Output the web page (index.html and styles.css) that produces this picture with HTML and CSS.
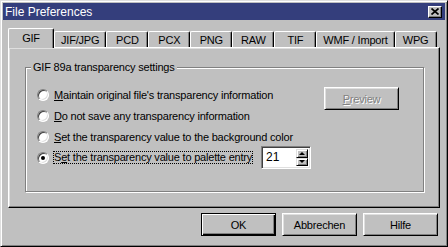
FILE: index.html
```html
<!DOCTYPE html>
<html lang="en">
<head>
    <meta charset="UTF-8">
    <title>File Preferences</title>
    <link rel="stylesheet" href="styles.css">
</head>
<body>
    <div class="window">
        <div class="titlebar">
            <span class="title">File Preferences</span>
            <button class="close-btn" aria-label="Close">
                <svg width="8" height="7" viewBox="0 0 8 7">
                    <path d="M0.5 0.5 L7.5 6.5 M7.5 0.5 L0.5 6.5" stroke="#000" stroke-width="1.7" fill="none"/>
                </svg>
            </button>
        </div>

        <div class="dialog">
            <div class="tabs">
                <div class="tab active">GIF</div>
                <div class="tab">JIF/JPG</div>
                <div class="tab">PCD</div>
                <div class="tab">PCX</div>
                <div class="tab">PNG</div>
                <div class="tab">RAW</div>
                <div class="tab">TIF</div>
                <div class="tab">WMF / Import</div>
                <div class="tab">WPG</div>
            </div>

            <div class="panel">
                <fieldset class="group">
                    <legend>GIF 89a transparency settings</legend>
                    <div class="group-body">
                        <div class="options">
                            <label class="option">
                                <span class="radio"></span>
                                <span><u>M</u>aintain original file's transparency information</span>
                            </label>
                            <label class="option">
                                <span class="radio"></span>
                                <span><u>D</u>o not save any transparency information</span>
                            </label>
                            <label class="option">
                                <span class="radio"></span>
                                <span><u>S</u>et the transparency value to the background color</span>
                            </label>
                            <div class="option">
                                <span class="radio checked"></span>
                                <span class="focus">S<u>e</u>t the transparency value to palette entry</span>
                                <div class="spin">
                                    <span class="spin-value">21</span>
                                    <div class="spin-btns">
                                        <span class="spin-btn"><i class="arrow up"></i></span>
                                        <span class="spin-btn"><i class="arrow down"></i></span>
                                    </div>
                                </div>
                            </div>
                        </div>
                        <button class="btn preview" disabled><u>P</u>review</button>
                    </div>
                </fieldset>
            </div>

            <div class="actions">
                <button class="btn default">OK</button>
                <button class="btn">Abbrechen</button>
                <button class="btn">Hilfe</button>
            </div>
        </div>
    </div>
</body>
</html>
```

FILE: styles.css
```css
:root {
    --face: #c0c0c0;
    --light: #dfdfdf;
    --shadow: #808080;
    --dark: #000000;
    --title: #343e7c;
}

* {
    margin: 0;
    padding: 0;
    box-sizing: border-box;
}

body {
    font-family: "Liberation Sans", Arial, sans-serif;
    font-size: 11px;
    letter-spacing: -0.2px;
    color: #000;
    background: var(--face);
}

.window {
    width: 448px;
    height: 247px;
    background: var(--face);
    border: 1px solid;
    border-color: var(--light) var(--dark) var(--dark) var(--light);
    box-shadow: inset 1px 1px #fff, inset -1px -1px var(--shadow);
    padding: 2px;
    display: flex;
    flex-direction: column;
}

/* title bar */
.titlebar {
    height: 17px;
    background: var(--title);
    color: #fff;
    display: flex;
    align-items: center;
    justify-content: space-between;
    padding: 0 3px 0 2px;
}

.title {
    font-size: 12px;
    letter-spacing: 0;
}

.close-btn {
    width: 14px;
    height: 12px;
    background: var(--face);
    border: 1px solid;
    border-color: #fff var(--dark) var(--dark) #fff;
    box-shadow: inset -1px -1px var(--shadow);
    display: flex;
    align-items: center;
    justify-content: center;
}

.close-btn svg {
    display: block;
}

.dialog {
    flex: 1;
    padding: 8px 5px 0 5px;
    display: flex;
    flex-direction: column;
}

/* tabs */
.tabs {
    display: flex;
    align-items: flex-end;
    height: 20px;
    margin-bottom: -1px;
    position: relative;
    z-index: 1;
}

.tab {
    height: 16px;
    margin-bottom: 1px;
    min-width: 42px;
    padding: 0 6px;
    display: flex;
    align-items: center;
    justify-content: center;
    background: var(--face);
    border-top: 1px solid #fff;
    border-left: 1px solid #fff;
    border-right: 1px solid var(--dark);
    box-shadow: inset -1px 0 var(--shadow);
    border-radius: 2px 2px 0 0;
    white-space: nowrap;
}

.tab.active {
    width: 46px;
    height: 20px;
    margin-bottom: 0;
    padding-bottom: 2px;
}

/* tab page */
.panel {
    height: 161px;
    border: 1px solid;
    border-color: #fff var(--dark) var(--dark) #fff;
    box-shadow: inset -1px -1px var(--shadow), inset 1px 1px var(--light);
    padding: 13px 15px 15px 16px;
    display: flex;
}

.group {
    flex: 1;
    min-width: 0;
    border: 1px solid var(--shadow);
    box-shadow: inset 1px 1px #fff, 1px 1px #fff;
    padding: 0;
}

.group legend {
    margin-left: 5px;
    padding: 0 2px;
    line-height: 13px;
    background: var(--face);
}

.group-body {
    display: flex;
    padding: 10px 24px 0 11px;
}

.options {
    flex: 1;
    display: flex;
    flex-direction: column;
}

.option {
    height: 21px;
    display: flex;
    align-items: center;
    gap: 5px;
    white-space: nowrap;
}

.radio {
    width: 12px;
    height: 12px;
    flex: none;
    border-radius: 50%;
    background: #fff;
    border: 1px solid;
    border-color: var(--shadow) #fff #fff var(--shadow);
    box-shadow: inset 1px 1px #404040, inset -1px -1px var(--light);
    position: relative;
}

.radio.checked::after {
    content: '';
    position: absolute;
    left: 3px;
    top: 3px;
    width: 4px;
    height: 4px;
    border-radius: 50%;
    background: #000;
}

.focus {
    border: 1px dotted #000;
    margin-left: -1px;
    line-height: 11px;
}

/* number spinner */
.spin {
    width: 50px;
    height: 23px;
    margin-left: 3px;
    display: flex;
    background: #fff;
    border: 1px solid;
    border-color: var(--shadow) #fff #fff var(--shadow);
    box-shadow: inset 1px 1px #404040, inset -1px -1px var(--light);
    padding: 2px;
}

.spin-value {
    flex: 1;
    padding-left: 2px;
    font-size: 12px;
    letter-spacing: 0;
    line-height: 17px;
}

.spin-btns {
    width: 12px;
    display: flex;
    flex-direction: column;
}

.spin-btn {
    flex: 1;
    background: var(--face);
    border: 1px solid;
    border-color: var(--light) var(--dark) var(--dark) var(--light);
    box-shadow: inset 1px 1px #fff, inset -1px -1px var(--shadow);
    display: flex;
    align-items: center;
    justify-content: center;
}

.arrow {
    width: 0;
    height: 0;
    border-left: 3px solid transparent;
    border-right: 3px solid transparent;
}

.arrow.up {
    border-bottom: 3px solid #000;
}

.arrow.down {
    border-top: 3px solid #000;
}

/* push buttons */
.btn {
    width: 75px;
    height: 23px;
    font-family: inherit;
    font-size: 11px;
    letter-spacing: inherit;
    color: #000;
    background: var(--face);
    border: 1px solid;
    border-color: #fff var(--dark) var(--dark) #fff;
    box-shadow: inset 1px 1px var(--light), inset -1px -1px var(--shadow);
}

.btn.default {
    border-color: var(--dark);
    box-shadow: inset 1px 1px #fff, inset -1px -1px var(--dark), inset -2px -2px var(--shadow);
}

.btn.preview {
    margin-top: 3px;
    color: var(--shadow);
    text-shadow: 1px 1px #fff;
}

.actions {
    display: flex;
    justify-content: flex-end;
    gap: 6px;
    margin-top: 5px;
    padding-right: 2px;
}
```
